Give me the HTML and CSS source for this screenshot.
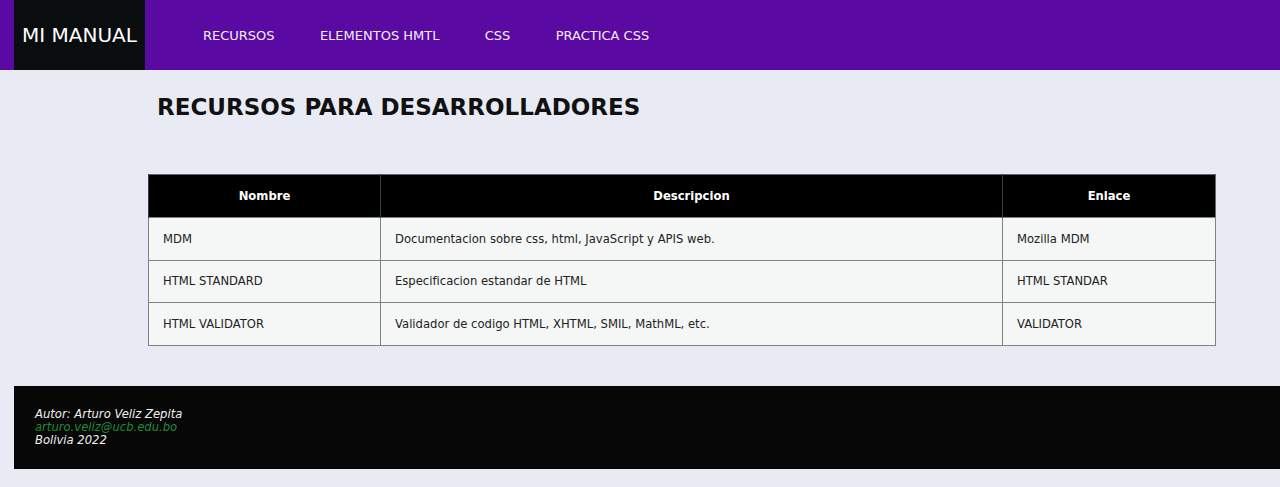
FILE: index.html
```html
<!DOCTYPE html>
<html lang="es">
<head>
<meta charset="utf-8">
<title>Mi Manual</title>
<link rel="stylesheet" href="styles.css">
</head>
<body>
<header class="top">
  <div class="logo">MI MANUAL</div>
  <nav class="nav">
    <a class="nav-link" href="#">RECURSOS</a>
    <a class="nav-link" href="#">ELEMENTOS HMTL</a>
    <a class="nav-link" href="#">CSS</a>
    <a class="nav-link" href="#">PRACTICA CSS</a>
  </nav>
</header>
<main class="content">
  <h1 class="title">RECURSOS PARA DESARROLLADORES</h1>
  <table class="res">
    <thead>
      <tr><th class="c1">Nombre</th><th class="c2">Descripcion</th><th class="c3">Enlace</th></tr>
    </thead>
    <tbody>
      <tr><td>MDM</td><td>Documentacion sobre css, html, JavaScript y APIS web.</td><td>Mozilla MDM</td></tr>
      <tr><td>HTML STANDARD</td><td>Especificacion estandar de HTML</td><td>HTML STANDAR</td></tr>
      <tr><td>HTML VALIDATOR</td><td>Validador de codigo HTML, XHTML, SMIL, MathML, etc.</td><td>VALIDATOR</td></tr>
    </tbody>
  </table>
</main>
<footer class="foot">
  <p class="foot-line">Autor: Arturo Veliz Zepita</p>
  <p class="foot-line mail">arturo.veliz@ucb.edu.bo</p>
  <p class="foot-line">Bolivia 2022</p>
</footer>
</body>
</html>
```
FILE: styles.css
```css
html, body {
  margin: 0;
  padding: 0;
}
body {
  background: #e8ebf3;
  font-family: "DejaVu Sans", Verdana, sans-serif;
  color: #111;
}
.top {
  display: flex;
  align-items: stretch;
  height: 70px;
  background: #5a09a2;
}
.logo {
  margin-left: 14px;
  width: 131px;
  background: #0a0d0d;
  color: #fff;
  font-size: 20px;
  display: flex;
  align-items: center;
  justify-content: center;
}
.nav {
  display: flex;
  align-items: center;
  margin-left: 58px;
  gap: 45.3px;
}
.nav-link {
  color: #f4f0fa;
  text-decoration: none;
  font-size: 13px;
}
.content {
  padding: 0 64px 0 148px;
}
.title {
  margin: 0;
  padding: 24px 0 0 9px;
  height: 104px;
  box-sizing: border-box;
  font-size: 23px;
  font-weight: bold;
  color: #111;
}
.res {
  width: 1068px;
  border-collapse: collapse;
  font-size: 11.6px;
  border: 1px solid #5f6868;
}
.res th {
  background: #000;
  color: #fff;
  height: 42px;
  font-weight: bold;
  border-left: 1px solid #3c3c3c;
  padding: 0;
}
.res td {
  background: #f5f7f7;
  height: 41.6px;
  padding: 0 14px;
  border: 1px solid #7a8484;
  color: #222;
}
.c1 { width: 231px; }
.c2 { width: 621px; }
.foot {
  margin: 40px 0 0 14px;
  height: 83px;
  box-sizing: border-box;
  padding: 22px 21px 0;
  background: #070707;
  color: #f0f0f0;
  font-style: italic;
  font-size: 11.6px;
}
.foot-line {
  margin: 0;
  line-height: 13px;
}
.mail {
  color: #1f8a3a;
}
```
